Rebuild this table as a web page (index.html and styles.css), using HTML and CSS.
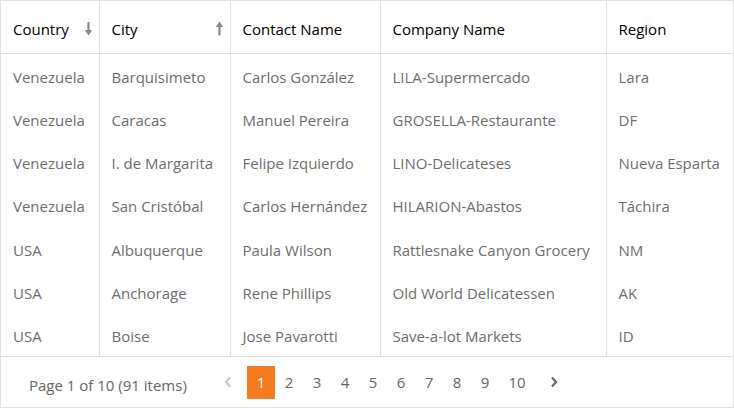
FILE: index.html
```html
<!DOCTYPE html>
<html>
<head>
<meta charset="utf-8">
<link rel="stylesheet" href="styles.css">
</head>
<body>
<div class="grid">
  <table class="tbl">
    <colgroup>
      <col class="c1"><col class="c2"><col class="c3"><col class="c4"><col class="c5">
    </colgroup>
    <thead>
      <tr>
        <th><div class="hcell"><span>Country</span><svg class="sort" width="9" height="15" viewBox="0 0 9 15"><path d="M4.5 1v10" stroke="#8a8a8a" stroke-width="2.2"/><path d="M0.8 9L4.5 14.5 8.2 9z" fill="#8a8a8a"/></svg></div></th>
        <th><div class="hcell"><span>City</span><svg class="sort" width="9" height="15" viewBox="0 0 9 15"><path d="M4.5 4v10.5" stroke="#8a8a8a" stroke-width="2.2"/><path d="M0.8 6L4.5 0.5 8.2 6z" fill="#8a8a8a"/></svg></div></th>
        <th>Contact Name</th>
        <th>Company Name</th>
        <th>Region</th>
      </tr>
    </thead>
    <tbody>
      <tr><td>Venezuela</td><td>Barquisimeto</td><td>Carlos González</td><td>LILA-Supermercado</td><td>Lara</td></tr>
      <tr><td>Venezuela</td><td>Caracas</td><td>Manuel Pereira</td><td>GROSELLA-Restaurante</td><td>DF</td></tr>
      <tr><td>Venezuela</td><td>I. de Margarita</td><td>Felipe Izquierdo</td><td>LINO-Delicateses</td><td>Nueva Esparta</td></tr>
      <tr class="tall"><td>Venezuela</td><td>San Cristóbal</td><td>Carlos Hernández</td><td>HILARION-Abastos</td><td>Táchira</td></tr>
      <tr><td>USA</td><td>Albuquerque</td><td>Paula Wilson</td><td>Rattlesnake Canyon Grocery</td><td>NM</td></tr>
      <tr><td>USA</td><td>Anchorage</td><td>Rene Phillips</td><td>Old World Delicatessen</td><td>AK</td></tr>
      <tr><td>USA</td><td>Boise</td><td>Jose Pavarotti</td><td>Save-a-lot Markets</td><td>ID</td></tr>
    </tbody>
  </table>
  <div class="pager">
    <span class="info">Page 1 of 10 (91 items)</span>
    <div class="pages">
      <span class="nav prev"><svg width="8" height="12" viewBox="0 0 8 12"><path d="M6 1.5L2 6l4 4.5" fill="none" stroke="#c8c8c8" stroke-width="2.2"/></svg></span>
      <span class="pg active">1</span>
      <span class="pg">2</span>
      <span class="pg">3</span>
      <span class="pg">4</span>
      <span class="pg">5</span>
      <span class="pg">6</span>
      <span class="pg">7</span>
      <span class="pg">8</span>
      <span class="pg">9</span>
      <span class="pg wide">10</span>
      <span class="nav next"><svg width="8" height="12" viewBox="0 0 8 12"><path d="M2 1.5L6 6l-4 4.5" fill="none" stroke="#666" stroke-width="2.2"/></svg></span>
    </div>
  </div>
</div>
</body>
</html>
```
FILE: styles.css
```css
html, body {
  margin: 0;
  padding: 0;
  background: #fff;
}
body {
  font-family: "Open Sans", "Noto Sans", sans-serif;
  font-size: 15px;
}
.grid {
  width: 734px;
  height: 408px;
  box-sizing: border-box;
  border: 1px solid #e0e0e0;
  display: flex;
  flex-direction: column;
}
.tbl {
  width: 100%;
  table-layout: fixed;
  border-collapse: collapse;
}
.c1 { width: 98px; }
.c2 { width: 131px; }
.c3 { width: 150px; }
.c4 { width: 226px; }
.c5 { width: auto; }
.tbl th {
  height: 48px;
  padding: 4px 12px 0;
  text-align: left;
  font-weight: normal;
  color: #000;
  border-left: 1px solid #e0e0e0;
  border-bottom: 1px solid #e0e0e0;
  white-space: nowrap;
}
.tbl td {
  height: 41px;
  padding: 2px 12px 0;
  color: #6e6e6e;
  border-left: 1px solid #e0e0e0;
  white-space: nowrap;
  overflow: hidden;
}
.tbl tr.tall td { height: 42px; }
.tbl th:first-child, .tbl td:first-child { border-left: none; }
.tbl tbody tr:last-child td { border-bottom: 1px solid #e0e0e0; }
.hcell {
  display: flex;
  align-items: center;
  justify-content: space-between;
}
.sort { margin-right: -6px; margin-top: -1px; }
.pager {
  flex: 1;
  display: flex;
  align-items: center;
  padding-left: 28px;
  color: #666;
}
.info { width: 185px; padding-top: 6px; }
.pages {
  display: flex;
  align-items: center;
}
.nav {
  width: 28px;
  height: 33px;
  display: flex;
  align-items: center;
  justify-content: center;
}
.nav.prev { margin-right: 5px; }
.nav.next { margin-left: 5px; }
.pg {
  width: 28px;
  height: 33px;
  display: flex;
  align-items: center;
  justify-content: center;
  color: #666;
}
.pg.wide { width: 36px; }
.pg.active {
  background: #f47b20;
  color: #fff;
}
```
